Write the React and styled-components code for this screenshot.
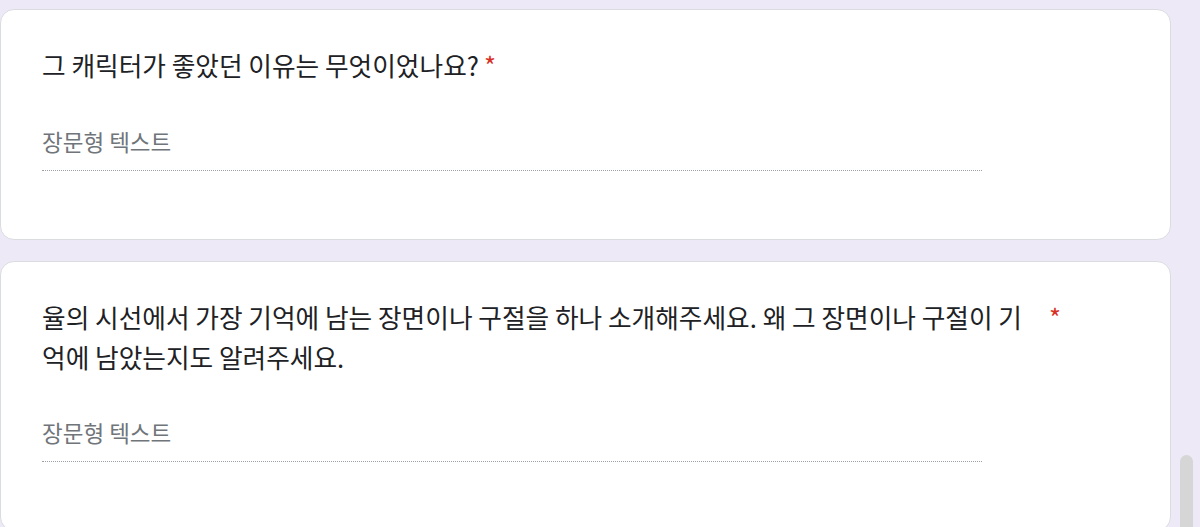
import React from 'react';
import styled, { createGlobalStyle } from 'styled-components';

const Global = createGlobalStyle`
  html, body {
    margin: 0;
    padding: 0;
    background: #eee9f7;
    overflow: hidden;
  }
  body {
    font-family: "Noto Sans CJK KR", "Noto Sans", Roboto, sans-serif;
  }
`;

const Page = styled.div`
  position: relative;
  height: 527px;
  padding-top: 9px;
  box-sizing: border-box;
  display: flex;
  flex-direction: column;
  gap: 21px;
`;

const Card = styled.div`
  width: 1171px;
  box-sizing: border-box;
  background: #fff;
  border: 1px solid #dadce0;
  border-radius: 14px;
  padding: 35px 41px 68px 41px;
  flex-shrink: 0;
`;

const TitleRow = styled.div`
  display: flex;
  align-items: flex-start;
`;

const Title = styled.div`
  font-size: 25.7px;
  line-height: 40px;
  color: #202124;
  max-width: ${p => p.$max || 'none'};
`;

const Star = styled.span`
  color: #d93025;
  font-size: 25.7px;
  line-height: 40px;
  padding-left: ${p => p.$gap}px;
`;

const Answer = styled.div`
  width: 940px;
  margin-top: ${p => p.$mt}px;
  padding-bottom: 15px;
  border-bottom: 1px dotted #9aa0a6;
  font-size: 22.5px;
  line-height: 28px;
  color: #70757a;
`;

const Thumb = styled.div`
  position: absolute;
  left: 1180px;
  top: 455px;
  width: 13px;
  height: 90px;
  border-radius: 7px;
  background: #d6d6d6;
`;

export default function App() {
  return (
    <>
      <Global />
      <Page>
        <Card>
          <TitleRow>
            <Title>그 캐릭터가 좋았던 이유는 무엇이었나요?</Title>
            <Star $gap={5}>*</Star>
          </TitleRow>
          <Answer $mt={42}>장문형 텍스트</Answer>
        </Card>
        <Card>
          <TitleRow>
            <Title $max="990px">
              율의 시선에서 가장 기억에 남는 장면이나 구절을 하나 소개해주세요. 왜 그 장면이나 구절이 기억에 남았는지도 알려주세요.
            </Title>
            <Star $gap={17}>*</Star>
          </TitleRow>
          <Answer $mt={41}>장문형 텍스트</Answer>
        </Card>
        <Thumb />
      </Page>
    </>
  );
}
